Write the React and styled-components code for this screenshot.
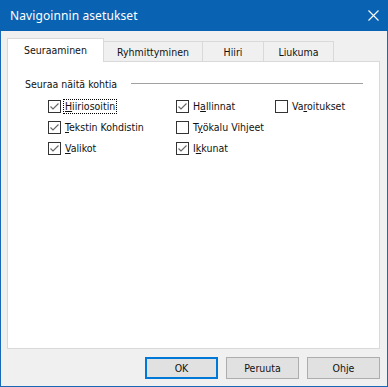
import React from "react";
import styled, { createGlobalStyle } from "styled-components";

const GlobalStyle = createGlobalStyle`
  body {
    margin: 0;
    background: #ffffff;
  }
  * {
    box-sizing: border-box;
  }
`;

const uiFont = `"DejaVu Sans Condensed", "DejaVu Sans", "Liberation Sans", sans-serif`;

const tabs = ["Seuraaminen", "Ryhmittyminen", "Hiiri", "Liukuma"];
const tabWidths = [97, 99, 61, 70];

const items = [
  { pre: "", key: "H", post: "iiriosoitin", checked: true, focus: true },
  { pre: "H", key: "a", post: "llinnat", checked: true },
  { pre: "Va", key: "r", post: "oitukset", checked: false },
  { pre: "", key: "T", post: "ekstin Kohdistin", checked: true },
  { pre: "T", key: "y", post: "ökalu Vihjeet", checked: false },
  null,
  { pre: "", key: "V", post: "alikot", checked: true },
  { pre: "I", key: "k", post: "kunat", checked: true },
  null,
];

export default function App() {
  return (
    <>
      <GlobalStyle />
      <Window>
        <TitleBar>
          <Title>Navigoinnin asetukset</Title>
          <CloseButton>
            <svg width="11" height="11" viewBox="0 0 11 11">
              <path d="M0.5 0.5 L10.5 10.5 M10.5 0.5 L0.5 10.5" stroke="#fff" strokeWidth="1.1" />
            </svg>
          </CloseButton>
        </TitleBar>
        <Body>
          <TabRow>
            {tabs.map((t, i) => (
              <Tab key={t} $active={i === 0} $width={tabWidths[i]}>
                {t}
              </Tab>
            ))}
          </TabRow>
          <Panel>
            <GroupHeading>
              <span>Seuraa näitä kohtia</span>
              <Rule />
            </GroupHeading>
            <CheckGrid>
              {items.map((it, i) =>
                it ? (
                  <Item key={i}>
                    <Box>
                      {it.checked && (
                        <svg width="11" height="11" viewBox="0 0 11 11">
                          <polyline points="1.5,5.5 4,8 9.5,2.5" fill="none" stroke="#666" strokeWidth="1.1" />
                        </svg>
                      )}
                    </Box>
                    <Label $focus={it.focus}>
                      {it.pre}
                      <u>{it.key}</u>
                      {it.post}
                    </Label>
                  </Item>
                ) : (
                  <span key={i} />
                )
              )}
            </CheckGrid>
          </Panel>
          <ButtonRow>
            <Button $default>OK</Button>
            <Button>Peruuta</Button>
            <Button>Ohje</Button>
          </ButtonRow>
        </Body>
      </Window>
    </>
  );
}

const Window = styled.div`
  width: 388px;
  height: 387px;
  border: 1px solid #1a68b5;
  border-top: none;
  background: #f0f0f0;
  display: flex;
  flex-direction: column;
  font-family: ${uiFont};
  font-size: 10.5px;
  color: #111;
`;

const TitleBar = styled.div`
  height: 31px;
  margin: 0 -1px;
  background: #0a63b2;
  display: flex;
  align-items: center;
  justify-content: space-between;
  padding: 0 9px 0 10px;
`;

const Title = styled.div`
  color: #fff;
  font-family: "Noto Sans", "Open Sans", sans-serif;
  font-size: 12px;
  letter-spacing: 0.1px;
`;

const CloseButton = styled.div`
  width: 12px;
  height: 12px;
  display: flex;
  align-items: center;
  justify-content: center;
`;

const Body = styled.div`
  flex: 1;
  display: flex;
  flex-direction: column;
  padding: 7px 7px 0 6px;
`;

const TabRow = styled.div`
  display: flex;
  align-items: flex-end;
  height: 23px;
`;

const Tab = styled.div`
  width: ${(p) => p.$width}px;
  height: ${(p) => (p.$active ? 24 : 20)}px;
  margin-bottom: ${(p) => (p.$active ? -1 : 0)}px;
  position: relative;
  z-index: ${(p) => (p.$active ? 1 : 0)};
  background: ${(p) => (p.$active ? "#fff" : "#f0f0f0")};
  border: 1px solid #d9d9d9;
  border-bottom: none;
  border-left-width: ${(p) => (p.$active ? 1 : 0)}px;
  display: flex;
  align-items: center;
  justify-content: center;
  padding-bottom: ${(p) => (p.$active ? 1 : 0)}px;
`;

const Panel = styled.div`
  height: 288px;
  background: #fff;
  border: 1px solid #d9d9d9;
  padding: 15px 16px 0 17px;
`;

const GroupHeading = styled.div`
  display: flex;
  align-items: center;
  height: 14px;
  gap: 14px;
`;

const Rule = styled.div`
  flex: 1;
  height: 1px;
  background: #a0a0a0;
  margin-top: -1px;
`;

const CheckGrid = styled.div`
  display: grid;
  grid-template-columns: 128px 99px auto;
  grid-auto-rows: 21px;
  margin: 5px 0 0 23px;
`;

const Item = styled.div`
  display: flex;
  align-items: center;
  gap: 2px;
`;

const Box = styled.div`
  width: 13px;
  height: 13px;
  border: 1px solid #333;
  background: #fff;
  display: flex;
  align-items: center;
  justify-content: center;
`;

const Label = styled.span`
  border: 1px dotted ${(p) => (p.$focus ? "#000" : "transparent")};
  padding: 0 1px;
  line-height: 13px;
  white-space: nowrap;
`;

const ButtonRow = styled.div`
  display: flex;
  justify-content: flex-end;
  gap: 8px;
  margin-top: 8px;
`;

const Button = styled.div`
  width: 73px;
  height: 22px;
  background: #e1e1e1;
  border: ${(p) => (p.$default ? "2px solid #0078d7" : "1px solid #adadad")};
  display: flex;
  align-items: center;
  justify-content: center;
`;
